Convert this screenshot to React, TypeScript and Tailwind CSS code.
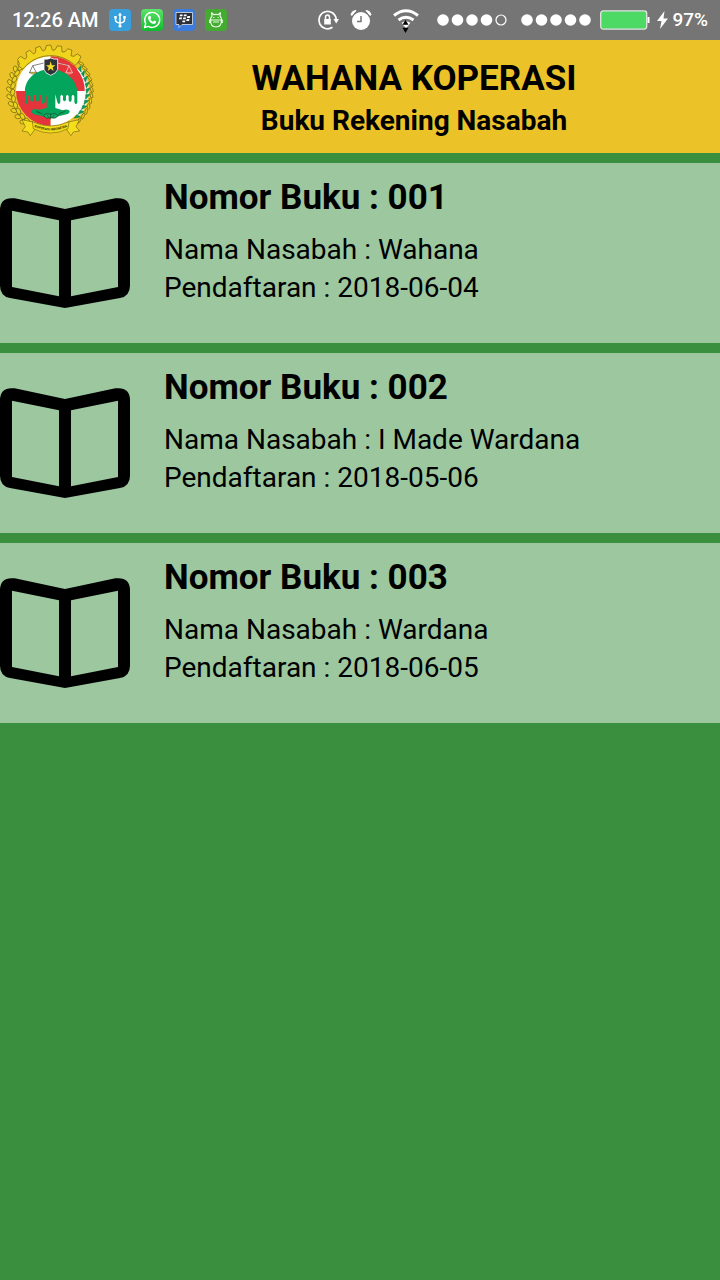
import React from "react";

type Book = { number: string; owner: string; registered: string };

const books: Book[] = [
  { number: "001", owner: "Wahana", registered: "2018-06-04" },
  { number: "002", owner: "I Made Wardana", registered: "2018-05-06" },
  { number: "003", owner: "Wardana", registered: "2018-06-05" },
];

const CX = 152;
const CY = 156;

function polar(r: number, deg: number): [number, number] {
  const a = (deg * Math.PI) / 180;
  return [CX + r * Math.cos(a), CY + r * Math.sin(a)];
}

function gearPath(): string {
  const teeth = 7;
  const start = -142;
  const span = 96;
  const step = span / teeth;
  const pts: string[] = [];
  const add = (r: number, d: number) => {
    const [x, y] = polar(r, d);
    pts.push(`${x.toFixed(1)} ${y.toFixed(1)}`);
  };
  for (let i = 0; i < teeth; i++) {
    const d = start + i * step;
    add(122, d);
    add(125, d + step * 0.25);
    add(137, d + step * 0.4);
    add(138, d + step * 0.8);
    add(124, d + step * 0.95);
  }
  for (let d = start + span; d >= start; d -= 4) add(106, d);
  return `M${pts.join("L")}Z`;
}

function cottonPath(deg: number): string {
  const a = polar(106, deg - 3);
  const b = polar(118, deg - 4);
  const c = polar(108, deg + 4);
  return `M${a.join(" ")}L${b.join(" ")}L${c.join(" ")}Z`;
}

function Emblem() {
  const leaves = Array.from({ length: 10 }, (_, i) => 128 + i * 10);
  const cotton = Array.from({ length: 10 }, (_, i) => -36 + i * 9);
  const grains = Array.from({ length: 13 }, (_, i) => -42 + i * 8);
  return (
    <svg viewBox="0 6 324 336" className="h-28 w-[108px] shrink-0" role="img" aria-label="Logo koperasi">
      <g stroke="#5c520d" strokeWidth="1.8" fill="#ecd21f">
        {leaves.map((d) => {
          const [x, y] = polar(114, d);
          const [x2, y2] = polar(125, d + 4);
          return (
            <g key={d}>
              <ellipse cx={x2} cy={y2} rx="9" ry="6" transform={`rotate(${d + 50} ${x2} ${y2})`} />
              <ellipse cx={x} cy={y} rx="10" ry="6" transform={`rotate(${d + 100} ${x} ${y})`} />
            </g>
          );
        })}
        {grains.map((d) => {
          const [x, y] = polar(123, d);
          return <ellipse key={d} cx={x} cy={y} rx="9" ry="3.5" transform={`rotate(${d + 70} ${x} ${y})`} />;
        })}
      </g>
      <path d="M152 156V52A104 104 0 0 0 48 156Z" fill="#fff" />
      <path d="M152 156V52A104 104 0 0 1 256 156Z" fill="#e5343c" />
      <path d="M152 156H48A104 104 0 0 0 152 260Z" fill="#e5343c" />
      <path d="M152 156H256A104 104 0 0 1 152 260Z" fill="#fff" />
      <path
        d="M235.500 86.900A108.500 108.500 0 0 1 232 229"
        fill="none"
        stroke="#f4fbf2"
        strokeWidth="12"
      />
      {cotton.map((d) => (
        <path key={d} d={cottonPath(d)} fill="#0c9c58" stroke="#0b7f49" strokeWidth="2" />
      ))}
      <path d={gearPath()} fill="#f1d41c" stroke="#5c520d" strokeWidth="1.8" strokeLinejoin="round" />
      <path
        d="M75 158C74 121 108 91 151 91S230 121 232 158V190Q228 202 223 190V172Q219 164 215 172V184Q210 194 206 184V172Q202 164 198 172V182Q193 192 189 182V172Q185 162 181 172V190Q176 200 172 190L166 166V207L188 214C207 205 218 220 200 226L175 232H128L102 226C88 219 96 205 116 212L140 207V168L134 190Q129 202 125 190V172Q121 162 117 172V184Q112 194 108 184V172Q104 164 100 172V184Q95 194 91 184V172Q87 164 84 172V190Q78 200 76 188Z"
        fill="#03a45b"
      />
      <path d="M130 230Q139 219 152 226Q165 219 175 230Q166 242 152 236Q138 242 130 230Z" fill="#12b56b" stroke="#143d25" strokeWidth="2" />
      <path d="M109 217L127 225M194 217L176 225M152 224V241M140 227L147 236M164 227L157 236" stroke="#143d25" strokeWidth="2" />
      <path d="M98 80L132 72H172L207 80M98 80L89 101M98 80L109 101" fill="none" stroke="#444" strokeWidth="2" />
      <path d="M172 72L207 80L198 101M207 80L217 101" fill="none" stroke="#f4c9bb" strokeWidth="2.5" />
      <path d="M87 100H111Q100 110 87 100Z" fill="#f3d91c" stroke="#444" strokeWidth="1.5" />
      <path d="M196 100H219Q208 110 196 100Z" fill="#e95a53" stroke="#f4b7a8" strokeWidth="2" />
      <path d="M132 60Q143 62 152 57Q162 62 173 60V91Q170 103 152 109Q134 103 132 91Z" fill="#303438" stroke="#fff" strokeWidth="2.5" />
      <path d="M152 67L155.500 79H166L158 85.500L161 96L152 89.500L143 96L146 85.500L138 79H148.500Z" fill="#f5df27" />
      <g fill="#f5df1d" stroke="#5c520d" strokeWidth="1.6">
        <path d="M66 242L99 249L106 269L91 290L84 279L66 276L76 263Z" />
        <path d="M238 242L205 249L198 269L213 290L220 279L239 276L228 263Z" />
        <path d="M97 248Q152 274 207 248L204 269Q152 295 100 269Z" />
      </g>
      <path id="motto-line" d="M102 264Q152 285 203 263" fill="none" />
      <text fontSize="10" fontWeight="700" fill="#393300" className="font-[Roboto,sans-serif]">
        <textPath href="#motto-line" startOffset="50%" textAnchor="middle">KOPERASI INDONESIA</textPath>
      </text>
    </svg>
  );
}

function BookIcon() {
  return (
    <svg viewBox="0 51 390 330" className="h-[110px] w-[130px] shrink-0" aria-hidden="true">
      <path
        fillRule="evenodd"
        d="M195 84L346 52Q390 47 390 88V314Q390 345 360 351L195 381L30 351Q0 345 0 314V88Q0 47 44 52ZM36 89V318L177 346V118ZM213 118V346L354 318V89Z"
      />
    </svg>
  );
}

function AppIcons() {
  return (
    <div className="flex gap-[10px]">
      <svg viewBox="0 0 22 22" className="size-[22px]" role="img" aria-label="USB">
        <rect width="22" height="22" rx="4" fill="#369fdc" />
        <path d="M11 5V17M6.500 8V11Q6.500 13.500 11 14Q15.500 13.500 15.500 11V8" fill="none" stroke="#fff" strokeWidth="1.500" />
        <path d="M11 3.500L13 6.500H9ZM5.300 7H7.700V9.500H5.300ZM14.300 7H16.700V9.500H14.300Z" fill="#fff" />
        <circle cx="11" cy="17" r="1.600" fill="#fff" />
      </svg>
      <svg viewBox="0 0 22 22" className="size-[22px]" role="img" aria-label="WhatsApp">
        <defs>
          <linearGradient id="wa" x2="0" y2="1">
            <stop stopColor="#5ee36b" />
            <stop offset="1" stopColor="#0dbb2a" />
          </linearGradient>
        </defs>
        <rect width="22" height="22" rx="4" fill="url(#wa)" />
        <path d="M3.500 18.500L4.700 14.700A7.500 7.500 0 1 1 7.400 17.400Z" fill="none" stroke="#fff" strokeWidth="1.400" strokeLinejoin="round" />
        <path d="M8 6.800L9.500 7L10.200 9L9.300 10.200Q10.300 12 12 12.700L13.200 11.600L15.200 12.600Q15.300 14.600 13.300 15Q8 14.600 7 9Q7 7.500 8 6.800Z" fill="#fff" />
      </svg>
      <svg viewBox="0 0 22 22" className="size-[22px]" role="img" aria-label="BBM">
        <rect width="22" height="22" rx="4" fill="#3a7bdc" />
        <path d="M3 3.500H19.500V15.500H9L6 18.500V15.500H3Z" fill="#2b3038" stroke="#dfe5ec" strokeWidth=".8" />
        <path d="M7 5.500H9.800L9.400 7.300H6.600ZM11 5.500H13.800L13.400 7.300H10.600ZM6.300 8.500H9.100L8.700 10.300H5.900ZM10.300 8.500H13.100L12.700 10.300H9.900ZM14.400 7.100H17.200L16.800 8.900H14ZM9.600 11.500H12.400L12 13.300H9.200ZM13.700 10.100H16.500L16.100 11.900H13.300Z" fill="#fff" />
      </svg>
      <svg viewBox="0 0 22 22" className="size-[22px]" role="img" aria-label="Android">
        <rect width="22" height="22" rx="4" fill="#43ab30" />
        <g fill="none" stroke="#e9ffe4" strokeWidth="1.200" strokeLinecap="round" strokeLinejoin="round">
          <path d="M7 7L6.500 3.800L9 5.700Q11 5.200 13 5.700L15.500 3.800L15 7Q16.500 8.500 16.500 11H5.500Q5.500 8.500 7 7ZM5.500 11Q5.500 18 11 18T16.500 11M4.700 11V13.500M17.300 11V13.500" />
          <path d="M8.700 8.500H9M13 8.500H13.300M8.500 13H13.500" />
        </g>
      </svg>
    </div>
  );
}

function SignalDots({ filled }: { filled: number }) {
  return (
    <svg viewBox="0 0 72 14" className="h-[14px] w-[72px]" role="img" aria-label="Sinyal">
      {[0, 1, 2, 3, 4].map((i) =>
        i < filled ? (
          <circle key={i} cx={7 + i * 14.5} cy="7" r="5.800" fill="#fff" />
        ) : (
          <circle key={i} cx={7 + i * 14.5} cy="7" r="5" fill="none" stroke="#fff" strokeWidth="1.200" />
        ),
      )}
    </svg>
  );
}

function StatusBar() {
  return (
    <div className="flex h-10 items-center bg-[#757575] px-3 text-xl font-medium text-white">
      <span className="mr-[11px]">12:26 AM</span>
      <AppIcons />
      <div className="ml-auto flex items-center">
        <svg viewBox="0 0 22 22" className="mr-[11px] size-[22px]" role="img" aria-label="Kunci rotasi">
          <path d="M15.500 18.300A8.700 8.700 0 1 1 19.200 10" fill="none" stroke="#fff" strokeWidth="1.700" />
          <path d="M16.500 10H22L19.200 14.500Z" fill="#fff" />
          <path d="M7.200 10H13.800V15.500H7.200Z" fill="#fff" />
          <path d="M8.500 10.500V8.500A2 2.500 0 0 1 12.500 8.500V10.500" fill="none" stroke="#fff" strokeWidth="1.500" />
        </svg>
        <svg viewBox="0 0 22 22" className="mr-5 size-[22px]" role="img" aria-label="Alarm">
          <circle cx="11" cy="12" r="9" fill="#fff" />
          <path d="M1 5.500Q2 1.500 6 1.500L1.800 6.500ZM21 5.500Q20 1.500 16 1.500L20.200 6.500Z" fill="#fff" stroke="#fff" strokeLinejoin="round" />
          <path d="M11 7V12.500H7" fill="none" stroke="#757575" strokeWidth="1.500" />
        </svg>
        <svg viewBox="0 0 28 28" className="mr-4 size-7" role="img" aria-label="Wi-Fi">
          <g fill="none" stroke="#fff" strokeWidth="3">
            <path d="M2 9.500Q14 0 26 9.500" />
            <path d="M6.500 14Q14 8.500 21.500 14" />
            <path d="M10.500 18Q14 15.500 17.500 18" />
          </g>
          <path d="M10.800 18.500H17.200L14 22.500Z" fill="#fff" />
          <path d="M13.500 14L16.500 18.800H10.500ZM10.500 21.800H16.500L13.500 27Z" fill="#000" />
        </svg>
        <div className="mr-2 flex gap-3">
          <SignalDots filled={4} />
          <SignalDots filled={5} />
        </div>
        <svg viewBox="0 0 50 20" className="mr-[7px] h-5 w-[50px]" role="img" aria-label="Baterai">
          <rect x=".7" y=".9" width="46" height="18.200" rx="2.500" fill="#4cd964" stroke="#e4e4e4" strokeWidth="1.300" />
          <path d="M47.500 7H49.500V13H47.500Z" fill="#fff" />
        </svg>
        <svg viewBox="0 0 11 18" className="mr-1 h-[18px] w-[11px]" role="img" aria-label="Mengisi daya">
          <path d="M7.500 0L0 10H4.500L3 18L11 7.500H6.500Z" fill="#fff" />
        </svg>
        <span className="text-[19px]">97%</span>
      </div>
    </div>
  );
}

export default function App() {
  return (
    <div className="flex min-h-screen flex-col bg-[#3a8f3e] font-[Roboto,sans-serif] text-black">
      <StatusBar />
      <header className="mb-[10px] flex h-[113px] items-center bg-[#ebc329]">
        <Emblem />
        <div className="grow pt-[6px] text-center font-bold">
          <h1 className="text-[35px] leading-[42px]">WAHANA KOPERASI</h1>
          <p className="text-[28px] leading-[42px]">Buku Rekening Nasabah</p>
        </div>
      </header>
      <main>
        <ul className="flex flex-col gap-[10px]">
          {books.map((book) => (
            <li key={book.number}>
              <button type="button" className="flex h-[180px] w-full items-center gap-[34px] bg-[#9cc79f] text-left">
                <BookIcon />
                <span className="flex flex-col self-start pt-3 text-[28px] leading-[38px]">
                  <span className="mb-[10px] text-[35px] leading-[46px] font-bold">Nomor Buku : {book.number}</span>
                  <span>Nama Nasabah : {book.owner}</span>
                  <span>Pendaftaran : {book.registered}</span>
                </span>
              </button>
            </li>
          ))}
        </ul>
      </main>
    </div>
  );
}
